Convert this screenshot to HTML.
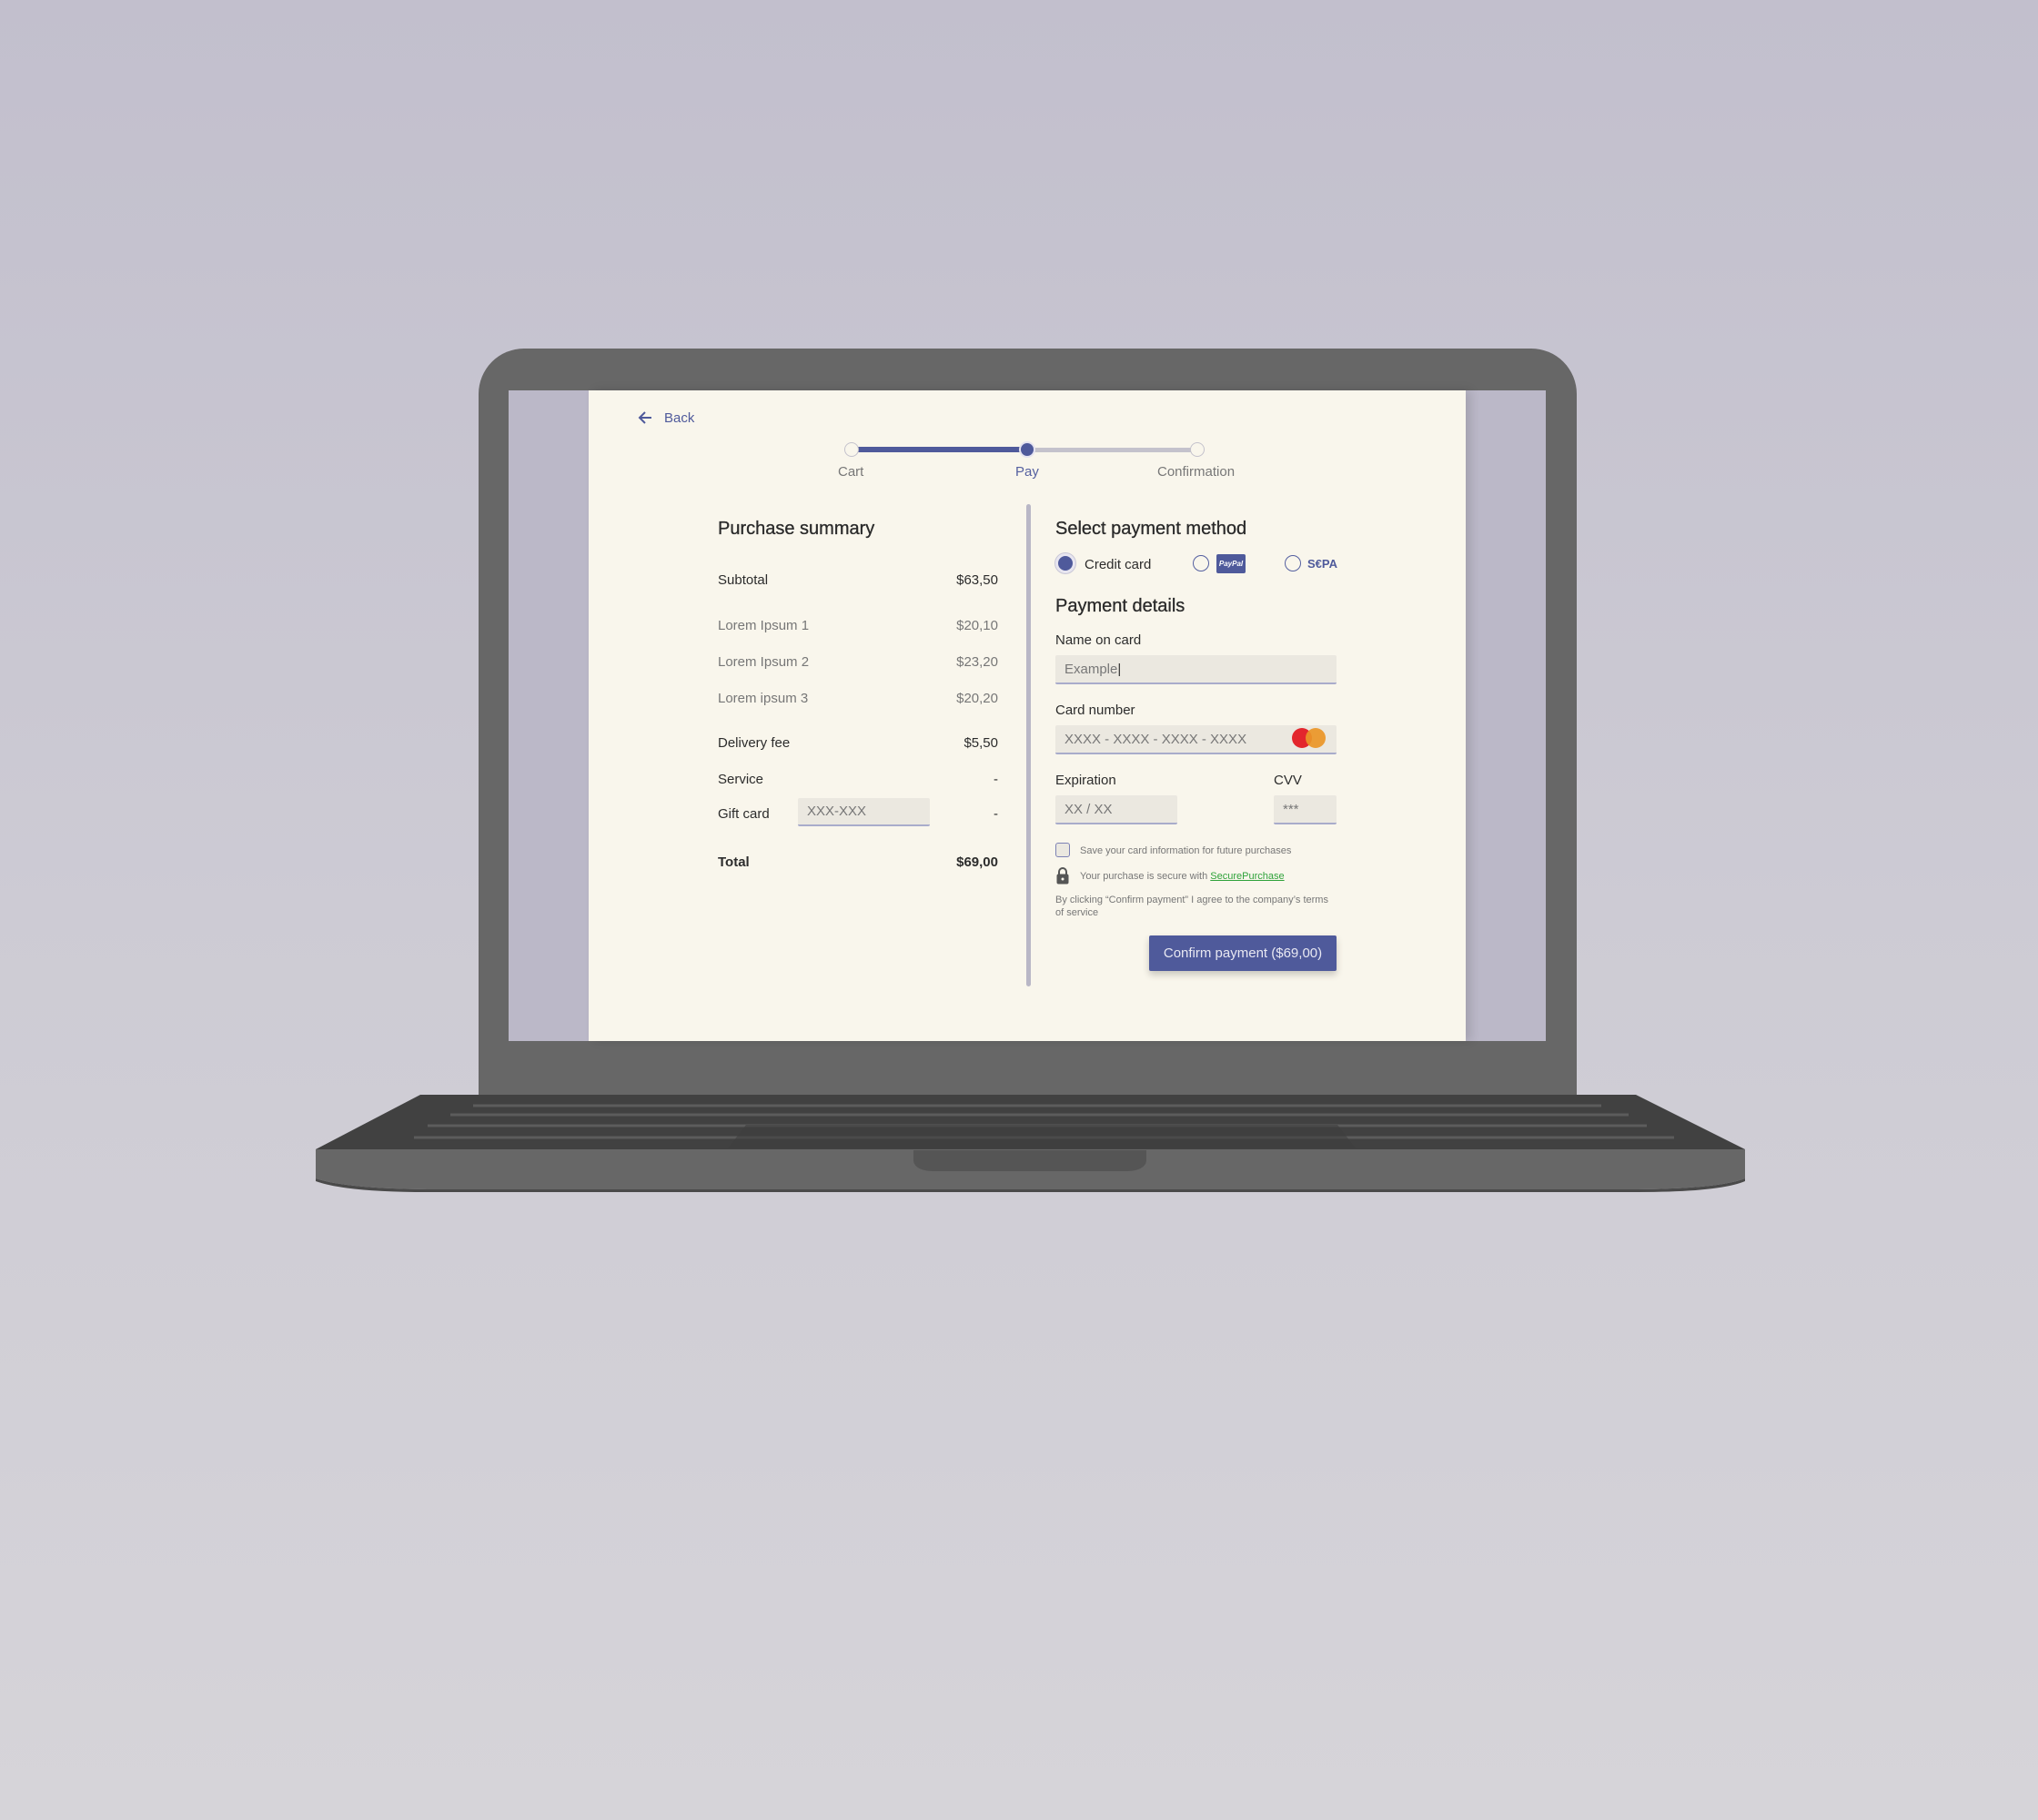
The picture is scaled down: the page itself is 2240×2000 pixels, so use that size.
<!DOCTYPE html>
<html><head><meta charset="utf-8"><style>
*{margin:0;padding:0;box-sizing:border-box}
body{width:2240px;height:2000px;overflow:hidden;background:linear-gradient(#c2bfcd,#cdcbd4 50%,#d6d4d9);font-family:"Liberation Sans",sans-serif;position:relative}
.a{position:absolute;white-space:nowrap}
.lid{left:526px;top:383px;width:1207px;height:830px;background:#676767;border-radius:50px 50px 0 0}
.screen{left:559px;top:429px;width:1140px;height:715px;background:#bbb8c8}
.page{left:647px;top:429px;width:964px;height:715px;background:#f9f6ec;box-shadow:6px 0 10px rgba(0,0,0,.12)}
.t{color:#2c2c2c;font-size:15px}
.g{color:#777;font-size:15px}
.inp{background:#ebe8e0;border-bottom:2px solid #a9accb;border-radius:2px;color:#777;font-size:15px;padding-left:10px;display:flex;align-items:center}
.h{font-size:20px;color:#2a2a2a;-webkit-text-stroke:0.3px #2a2a2a}
.s{font-size:11px;color:#777}
.rad{width:18px;height:18px;border-radius:50%;border:1.5px solid #5560a0;background:#f9f6ec}
</style></head><body>
<div class="a lid"></div>
<div class="a screen"></div>
<div class="a page"></div>

<svg class="a" style="left:700px;top:449px" width="20" height="20" viewBox="0 0 20 20"><path d="M16 10H4M9 4L3 10l6 6" fill="none" stroke="#4f5a9b" stroke-width="2"/></svg>
<div class="a" style="left:730px;top:451px;font-size:15px;color:#4f5a9b">Back</div>

<div class="a" style="left:936px;top:491px;width:193px;height:6px;background:#4f5a9b"></div>
<div class="a" style="left:1129px;top:492px;width:187px;height:5px;background:#c4c2cc"></div>
<div class="a" style="left:928px;top:486px;width:16px;height:16px;border-radius:50%;background:#f9f6ec;border:1.5px solid #c4c2cc"></div>
<div class="a" style="left:1120px;top:485px;width:18px;height:18px;border-radius:50%;background:#4f5a9b;border:2px solid #e6e4f0"></div>
<div class="a" style="left:1308px;top:486px;width:16px;height:16px;border-radius:50%;background:#f9f6ec;border:1.5px solid #c4c2cc"></div>
<div class="a" style="left:921px;top:510px;font-size:15px;color:#777">Cart</div>
<div class="a" style="left:1116px;top:510px;font-size:15px;color:#5560a0">Pay</div>
<div class="a" style="left:1272px;top:510px;font-size:15px;color:#777">Confirmation</div>

<div class="a" style="left:1128px;top:554px;width:5px;height:530px;background:#b9b7c6;border-radius:3px"></div>

<div class="a h" style="left:789px;top:570px">Purchase summary</div>
<div class="a t" style="left:789px;top:629px">Subtotal</div><div class="a t" style="right:1143px;top:629px">$63,50</div>
<div class="a g" style="left:789px;top:679px">Lorem Ipsum 1</div><div class="a g" style="right:1143px;top:679px">$20,10</div>
<div class="a g" style="left:789px;top:719px">Lorem Ipsum 2</div><div class="a g" style="right:1143px;top:719px">$23,20</div>
<div class="a g" style="left:789px;top:759px">Lorem ipsum 3</div><div class="a g" style="right:1143px;top:759px">$20,20</div>
<div class="a t" style="left:789px;top:808px">Delivery fee</div><div class="a t" style="right:1143px;top:808px">$5,50</div>
<div class="a t" style="left:789px;top:848px">Service</div><div class="a t" style="right:1143px;top:848px">-</div>
<div class="a t" style="left:789px;top:886px">Gift card</div><div class="a t" style="right:1143px;top:886px">-</div>
<div class="a inp" style="left:877px;top:877px;width:145px;height:31px">XXX-XXX</div>
<div class="a t" style="left:789px;top:939px;font-weight:bold">Total</div><div class="a t" style="right:1143px;top:939px;font-weight:bold">$69,00</div>

<div class="a h" style="left:1160px;top:570px">Select payment method</div>
<div class="a" style="left:1160px;top:608px;width:22px;height:22px;border-radius:50%;background:#4f5a9b;border:3px solid #e8e6f0;box-shadow:0 0 0 1px #c9c7d6"></div>
<div class="a t" style="left:1192px;top:612px">Credit card</div>
<div class="a rad" style="left:1311px;top:610px"></div>
<div class="a" style="left:1337px;top:609px;width:32px;height:21px;background:#4f5a9b;border-radius:2px;color:#fff;font-size:8px;font-style:italic;font-weight:bold;text-align:center;line-height:21px">PayPal</div>
<div class="a rad" style="left:1412px;top:610px"></div>
<div class="a" style="left:1437px;top:612px;font-size:13px;font-weight:bold;color:#4f5a9b">S€PA</div>

<div class="a h" style="left:1160px;top:655px">Payment details</div>
<div class="a t" style="left:1160px;top:695px">Name on card</div>
<div class="a inp" style="left:1160px;top:720px;width:309px;height:32px">Example<span style="color:#333">|</span></div>
<div class="a t" style="left:1160px;top:772px">Card number</div>
<div class="a inp" style="left:1160px;top:797px;width:309px;height:32px">XXXX - XXXX - XXXX - XXXX</div>
<div class="a" style="left:1420px;top:800px;width:22px;height:22px;border-radius:50%;background:#e3262d"></div>
<div class="a" style="left:1435px;top:800px;width:22px;height:22px;border-radius:50%;background:rgba(235,150,40,.93)"></div>
<div class="a t" style="left:1160px;top:849px">Expiration</div>
<div class="a t" style="left:1400px;top:849px">CVV</div>
<div class="a inp" style="left:1160px;top:874px;width:134px;height:32px">XX / XX</div>
<div class="a inp" style="left:1400px;top:874px;width:69px;height:32px">***</div>

<div class="a" style="left:1160px;top:926px;width:16px;height:16px;border:1.5px solid #7d82b5;border-radius:3px;background:#ebe8e0"></div>
<div class="a s" style="left:1187px;top:929px">Save your card information for future purchases</div>
<svg class="a" style="left:1160px;top:952px" width="16" height="20" viewBox="0 0 16 20"><path d="M4 9V6a4 4 0 0 1 8 0v3" fill="none" stroke="#555" stroke-width="2"/><rect x="1.5" y="8.5" width="13" height="11" rx="2" fill="#555"/><circle cx="8" cy="14" r="1.5" fill="#f9f6ec"/></svg>
<div class="a s" style="left:1187px;top:957px">Your purchase is secure with <span style="color:#2fa23a;text-decoration:underline">SecurePurchase</span></div>
<div class="a s" style="left:1160px;top:982px;line-height:14px;white-space:normal;width:300px">By clicking “Confirm payment” I agree to the company’s terms of service</div>
<div class="a" style="left:1263px;top:1028px;width:206px;height:39px;background:#4f5a9b;border-radius:2px;color:#e8e8f2;font-size:15px;text-align:center;line-height:39px;box-shadow:0 4px 8px rgba(0,0,0,.2)">Confirm payment ($69,00)</div>

<svg class="a" style="left:340px;top:1195px" width="1585" height="120" viewBox="340 1195 1585 120">
<path d="M462 1203 H1798 L1918 1263 H347 Z" fill="#414141"/>
<g stroke="#5c5c5c" stroke-width="3" fill="none">
<path d="M520 1215H1760M495 1225H1790M470 1237H1810M455 1250H1840"/>
</g>
<path d="M820 1236 H1470 L1490 1262 H800 Z" fill="#3e3e3e" opacity=".6"/>
<path d="M347 1263 H1918 V1295 Q1890 1306 1800 1307 H470 Q380 1306 347 1295 Z" fill="#676767"/>
<path d="M347 1295 Q380 1306 470 1307 H1800 Q1890 1306 1918 1295 V1298 Q1890 1310 1800 1310 H470 Q380 1310 347 1298Z" fill="#4a4a4a"/>
<path d="M1004 1264 H1260 V1276 Q1258 1286 1240 1287 H1024 Q1006 1286 1004 1276 Z" fill="#555"/>
</svg>
</body></html>
